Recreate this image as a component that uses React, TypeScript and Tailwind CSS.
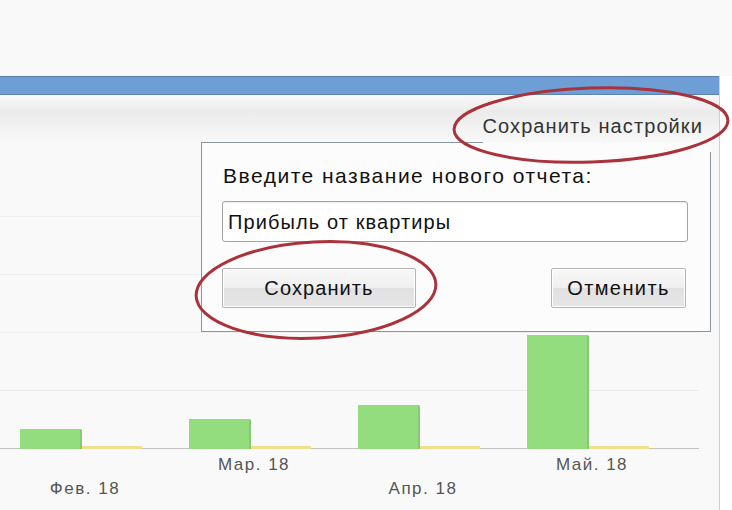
const groups = [
  { h: 20, label: "Фев. 18", row: 2 },
  { h: 30, label: "Мар. 18", row: 1 },
  { h: 44, label: "Апр. 18", row: 2 },
  { h: 114, label: "Май. 18", row: 1 },
];

function Chart() {
  return (
    <div className="flex flex-col">
      {/* plot: grid lines and bars share one grid cell */}
      <div className="grid h-[307px]">
        <div className="col-start-1 row-start-1 flex flex-col justify-end w-[699px]">
          <div className="h-[58px] border-t border-[#efefef]" />
          <div className="h-[58px] border-t border-[#efefef]" />
          <div className="h-[58px] border-t border-[#efefef]" />
          <div className="h-[58px] border-t border-[#ebebeb]" />
          <div className="h-[1px] bg-[#c2c2c2]" />
        </div>
        <div className="col-start-1 row-start-1 flex items-end pl-[20px]">
          {groups.map((g) => (
            <div key={g.label} className="flex w-[169px] shrink-0 items-end">
              <div
                className="w-[62px] bg-[#93dd7e] border-r-2 border-[#86c873] rounded-tr-[2px]"
                style={{ height: g.h }}
              />
              <div className="h-[3px] w-[60px] bg-[#f2df8e]" />
            </div>
          ))}
        </div>
      </div>
      <div className="flex pl-[20px] pt-[4px] font-['Liberation_Sans',Arial,sans-serif] text-[17px] tracking-[1.5px] text-[#555]">
        {groups.map((g) => (
          <div key={g.label} className="flex w-[169px] shrink-0 flex-col">
            <div className="flex h-[24px] w-[130px] items-center justify-center">
              {g.row === 1 ? g.label : ""}
            </div>
            <div className="flex h-[24px] w-[130px] items-center justify-center">
              {g.row === 2 ? g.label : ""}
            </div>
          </div>
        ))}
      </div>
    </div>
  );
}

function SaveDialog() {
  return (
    <div className="absolute left-[201px] top-0 h-[190px] w-[509px] border-l border-b border-[#8c949c] bg-[#fcfcfc] font-['Liberation_Sans',Arial,sans-serif] text-[#111]">
      <div className="flex">
        <div className="h-0 w-[281px] border-t border-[#8c949c]" />
      </div>
      <div className="absolute right-[-1px] top-[10px] bottom-[-1px] w-px bg-[#8c949c]" />
      <div className="px-[20px] pt-[21px]">
        <div className="pl-[1px] text-[21px] leading-[24px] tracking-[1.5px]">Введите название нового отчета:</div>
        <div className="mt-[13px] flex h-[41px] w-[466px] items-center rounded-[3px] border border-[#a3a3a3] bg-white px-[5px] text-[20px] tracking-[1.1px] shadow-[inset_0_1px_1px_rgba(0,0,0,0.08)]">
          Прибыль от квартиры
        </div>
        <div className="mt-[26px] flex justify-between pr-[4px]">
          <button className="h-[40px] w-[194px] rounded-[2px] border border-[#b4b4b4] bg-[linear-gradient(#f8f8f8_0%,#efefef_50%,#e1e1e1_51%,#e6e6e6_100%)] text-[20px] tracking-[1.1px] text-[#111] shadow-[inset_0_0_0_1px_#fff]">
            Сохранить
          </button>
          <button className="h-[40px] w-[135px] rounded-[2px] border border-[#b4b4b4] bg-[linear-gradient(#f8f8f8_0%,#efefef_50%,#e1e1e1_51%,#e6e6e6_100%)] text-[20px] tracking-[1.4px] text-[#111] shadow-[inset_0_0_0_1px_#fff]">
            Отменить
          </button>
        </div>
      </div>
    </div>
  );
}

export default function App() {
  return (
    <div className="relative h-[510px] w-[732px] overflow-hidden bg-white font-['Liberation_Sans',Arial,sans-serif]">
      <div className="h-[76px] bg-[#f9f9f9]" />
      <div className="flex">
        <div className="flex w-[720px] flex-col border-r border-[#cfcfcf]">
          <div className="h-[19px] border-y border-[#5b82b0] bg-[#6d9fd6]" />
          <div className="flex h-[47px] items-start justify-end bg-[linear-gradient(#f8f8f8_0%,#ebebeb_35%,#f2f2f2_70%,#f8f8f8_100%)] pr-[16px] pt-[19px] text-[20px] leading-[24px] tracking-[1.1px] text-[#333]">
            Сохранить настройки
          </div>
          <div className="relative h-[368px] bg-[#f9f9f9]">
            <Chart />
            <SaveDialog />
          </div>
        </div>
        <div className="flex-1 bg-white" />
      </div>

      {/* red marker ellipses drawn over the screenshot */}
      <svg
        className="pointer-events-none absolute left-0 top-0"
        width="732"
        height="510"
        viewBox="0 0 732 510"
      >
        <ellipse
          cx="591"
          cy="125"
          rx="137"
          ry="37"
          transform="rotate(-2 591 125)"
          fill="none"
          stroke="#a9323b"
          strokeWidth="3"
        />
        <ellipse
          cx="316"
          cy="290"
          rx="120"
          ry="48"
          transform="rotate(-3 316 290)"
          fill="none"
          stroke="#a9323b"
          strokeWidth="3"
        />
      </svg>
    </div>
  );
}
